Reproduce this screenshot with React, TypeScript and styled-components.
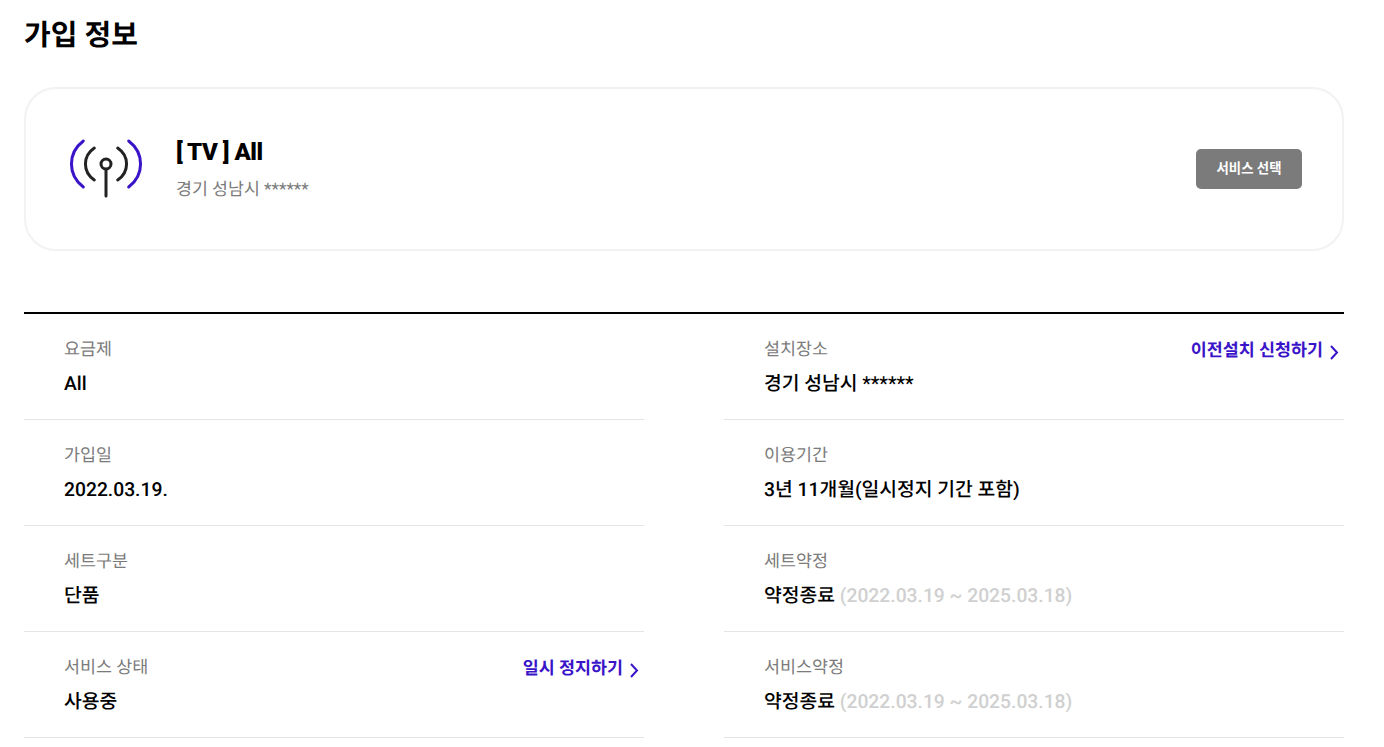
import styled, { createGlobalStyle } from "styled-components";

const GlobalStyle = createGlobalStyle`
    * {
        box-sizing: border-box;
    }

    body {
        margin: 0;
        background: #fff;
        font-family: Roboto, "Noto Sans CJK KR", sans-serif;
        text-rendering: geometricPrecision;
    }
`;

type Info = {
    label: string;
    value: string;
    period?: string;
    link?: string;
};

const PERIOD = "(2022.03.19 ~ 2025.03.18)";

const leftRows: Info[] = [
    { label: "요금제", value: "All" },
    { label: "가입일", value: "2022.03.19." },
    { label: "세트구분", value: "단품" },
    { label: "서비스 상태", value: "사용중", link: "일시 정지하기" },
];

const rightRows: Info[] = [
    { label: "설치장소", value: "경기 성남시 ******", link: "이전설치 신청하기" },
    { label: "이용기간", value: "3년 11개월(일시정지 기간 포함)" },
    { label: "세트약정", value: "약정종료", period: PERIOD },
    { label: "서비스약정", value: "약정종료", period: PERIOD },
];

const AntennaIcon = () => (
    <svg width="80" height="80" viewBox="0 0 80 80" fill="none" strokeWidth="3" strokeLinecap="round">
        <path d="M17.3 12C1.5 24 1.5 46 17.3 58" stroke="#3a14c8" />
        <path d="M62.7 12C78.5 24 78.5 46 62.7 58" stroke="#3a14c8" />
        <path d="M28.3 19C16.5 27 16.5 43 28.3 51" stroke="#222" />
        <path d="M51.7 19C63.5 27 63.5 43 51.7 51" stroke="#222" />
        <circle cx="40" cy="35" r="5" stroke="#222" />
        <path d="M40 40.5V67" stroke="#222" />
    </svg>
);

const Row = ({ label, value, period, link }: Info) => (
    <RowItem>
        <RowHead>
            <Label>{label}</Label>
            {link && (
                <LinkButton>
                    {link}
                    <svg width="10" height="15" viewBox="0 0 10 15" fill="none">
                        <path d="M2 1L8 7.5L2 14" stroke="#3a14c8" strokeWidth="2" />
                    </svg>
                </LinkButton>
            )}
        </RowHead>
        <Value>
            {value}
            {period && <Period> {period}</Period>}
        </Value>
    </RowItem>
);

export default function App() {
    return (
        <Page>
            <GlobalStyle />
            <Title>가입 정보</Title>
            <Card>
                <AntennaIcon />
                <CardText>
                    <CardName>[ TV ] All</CardName>
                    <CardAddress>경기 성남시 ******</CardAddress>
                </CardText>
                <SelectButton>서비스 선택</SelectButton>
            </Card>
            <Details>
                <Column>
                    {leftRows.map((row) => (
                        <Row key={row.label} {...row} />
                    ))}
                </Column>
                <Column>
                    {rightRows.map((row) => (
                        <Row key={row.label} {...row} />
                    ))}
                </Column>
            </Details>
        </Page>
    );
}

const Page = styled.div`
    width: 1320px;
    margin-left: 24px;
    padding-top: 15px;
`;

const Title = styled.h1`
    margin: 0;
    height: 72px;
    font-size: 29px;
    line-height: 43px;
    font-weight: 700;
    color: #000;
`;

const Card = styled.div`
    display: flex;
    align-items: center;
    gap: 30px;
    height: 164px;
    padding: 0 40px;
    border: 2px solid #f2f2f2;
    border-radius: 32px;
`;

const CardText = styled.div`
    flex: 1;
    display: flex;
    flex-direction: column;
    gap: 11px;
`;

const CardName = styled.div`
    font-size: 24px;
    line-height: 30px;
    font-weight: 900;
    letter-spacing: -0.5px;
    color: #000;
`;

const CardAddress = styled.div`
    font-size: 17.3px;
    line-height: 24px;
    color: #7b7b7b;
`;

const SelectButton = styled.button`
    width: 106px;
    height: 40px;
    padding: 0 0 4px;
    border: 0;
    border-radius: 5px;
    background: #7b7b7b;
    font-family: inherit;
    font-size: 13.4px;
    font-weight: 700;
    color: #fff;
`;

const Details = styled.div`
    display: grid;
    grid-template-columns: 620px 620px;
    justify-content: space-between;
    margin-top: 61px;
    border-top: 2px solid #000;
`;

const Column = styled.div`
    display: flex;
    flex-direction: column;
`;

const RowItem = styled.div`
    height: 106px;
    padding: 24px 5px 0 40px;
    border-bottom: 1px solid #e5e5e5;
`;

const RowHead = styled.div`
    display: flex;
    align-items: center;
    justify-content: space-between;
    height: 24px;
`;

const Label = styled.span`
    font-size: 17.4px;
    line-height: 24px;
    color: #7b7b7b;
`;

const LinkButton = styled.a`
    display: flex;
    align-items: center;
    gap: 6px;
    margin-top: 2px;
    font-size: 17.4px;
    line-height: 24px;
    font-weight: 700;
    color: #3a14c8;

    svg {
        margin-top: 2px;
    }
`;

const Value = styled.div`
    margin-top: 9px;
    font-size: 19.3px;
    line-height: 26px;
    font-weight: 500;
    color: #000;
`;

const Period = styled.span`
    color: #d0d0d0;
`;
